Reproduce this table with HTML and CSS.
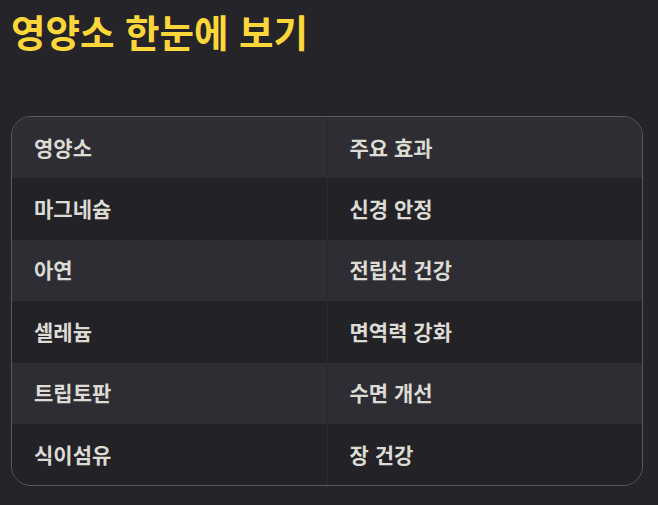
FILE: index.html
```html
<!DOCTYPE html>
<html lang="ko">
<head>
<meta charset="utf-8">
<link rel="stylesheet" href="styles.css">
</head>
<body>
<h1 class="title">영양소 한눈에 보기</h1>
<div class="table-wrap">
  <table class="nutri">
    <thead>
      <tr><th>영양소</th><th>주요 효과</th></tr>
    </thead>
    <tbody>
      <tr><td>마그네슘</td><td>신경 안정</td></tr>
      <tr><td>아연</td><td>전립선 건강</td></tr>
      <tr><td>셀레늄</td><td>면역력 강화</td></tr>
      <tr><td>트립토판</td><td>수면 개선</td></tr>
      <tr><td>식이섬유</td><td>장 건강</td></tr>
    </tbody>
  </table>
</div>
</body>
</html>
```
FILE: styles.css
```css
html, body {
  margin: 0;
  padding: 0;
  background: #252429;
}
body {
  padding: 0 15px 0 11px;
  font-family: "Noto Sans CJK KR", "Noto Sans", sans-serif;
}
.title {
  margin: 0;
  padding-top: 7px;
  height: 116px;
  box-sizing: border-box;
  font-size: 37.5px;
  line-height: 48px;
  font-weight: 700;
  color: #fdd73a;
  padding-left: 0;
}
.table-wrap {
  border: 1px solid #5b5a60;
  border-radius: 20px;
  overflow: hidden;
}
.nutri {
  width: 100%;
  border-collapse: collapse;
  table-layout: fixed;
}
.nutri th, .nutri td {
  height: 61.4px;
  padding: 0 0 2px 22px;
  text-align: left;
  font-size: 21px;
  font-weight: 700;
  color: #dcdbd4;
  box-sizing: border-box;
}
.nutri th + th, .nutri td + td {
  border-left: 1px solid #2a292e;
  padding-left: 22px;
}
.nutri thead tr, .nutri tbody tr:nth-child(even) {
  background: #2e2d33;
}
.nutri tbody tr:nth-child(odd) {
  background: #232227;
}
```
